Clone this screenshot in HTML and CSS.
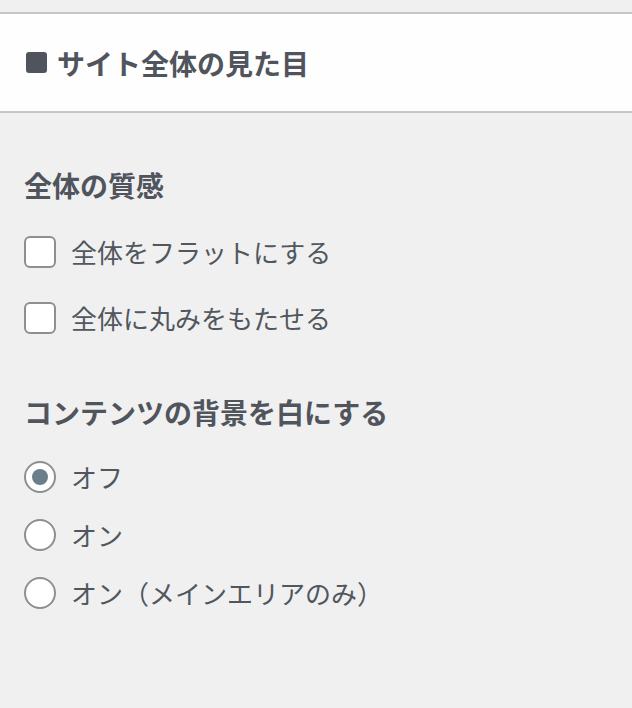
FILE: index.html
```html
<!DOCTYPE html>
<html lang="ja">
<head>
<meta charset="utf-8">
<title>サイト全体の見た目</title>
<link rel="stylesheet" href="styles.css">
</head>
<body>
<div class="panel">
  <div class="panel-header">
    <span class="square"></span>
    <h2 class="panel-title">サイト全体の見た目</h2>
  </div>
  <div class="panel-body">
    <section class="group group-texture">
      <h3 class="group-title">全体の質感</h3>
      <div class="options options-check">
        <label class="option"><input type="checkbox" class="check"><span class="option-label">全体をフラットにする</span></label>
        <label class="option"><input type="checkbox" class="check"><span class="option-label">全体に丸みをもたせる</span></label>
      </div>
    </section>
    <section class="group group-bg">
      <h3 class="group-title">コンテンツの背景を白にする</h3>
      <div class="options options-radio">
        <label class="option"><input type="radio" name="bg" class="radio" checked><span class="option-label">オフ</span></label>
        <label class="option"><input type="radio" name="bg" class="radio"><span class="option-label">オン</span></label>
        <label class="option"><input type="radio" name="bg" class="radio"><span class="option-label">オン（メインエリアのみ）</span></label>
      </div>
    </section>
  </div>
</div>
</body>
</html>
```
FILE: styles.css
```css
html, body {
  margin: 0;
  padding: 0;
}
body {
  background: #f0f0f0;
  font-family: "Noto Sans CJK JP", "Noto Sans", sans-serif;
  color: #50575e;
  width: 632px;
  height: 708px;
  overflow: hidden;
}
.panel {
  padding-top: 12px;
}
.panel-header {
  background: #fefefe;
  border-top: 2px solid #c5c6c9;
  border-bottom: 2px solid #c5c6c9;
  height: 97px;
  display: flex;
  align-items: center;
  padding-left: 26px;
  gap: 10px;
}
.square {
  width: 21px;
  height: 21px;
  border-radius: 3px;
  background: #50555d;
  flex: none;
}
.panel-title {
  margin: 0;
  font-size: 28px;
  font-weight: 700;
  line-height: 40px;
  color: #50555d;
}
.panel-body {
  padding: 0 24px;
}
.group-title {
  margin: 0;
  font-size: 28px;
  font-weight: 700;
  line-height: 40px;
  color: #50555d;
}
.group-texture {
  margin-top: 52px;
}
.group-bg {
  margin-top: 54px;
}
.options {
  display: flex;
  flex-direction: column;
}
.options-check {
  margin-top: 27px;
  gap: 26px;
}
.options-radio {
  margin-top: 25px;
  gap: 18px;
}
.option {
  display: flex;
  align-items: center;
  height: 40px;
  gap: 15px;
}
.option-label {
  font-size: 26px;
  line-height: 40px;
  color: #50575e;
}
.check, .radio {
  appearance: none;
  -webkit-appearance: none;
  margin: 0;
  width: 32px;
  height: 32px;
  box-sizing: border-box;
  border: 2px solid #8c8f94;
  background: #fff;
  flex: none;
  display: flex;
  align-items: center;
  justify-content: center;
}
.check {
  border-radius: 6px;
}
.radio {
  border-radius: 50%;
}
.radio:checked::before {
  content: "";
  width: 16px;
  height: 16px;
  border-radius: 50%;
  background: #6b7f88;
}
```
